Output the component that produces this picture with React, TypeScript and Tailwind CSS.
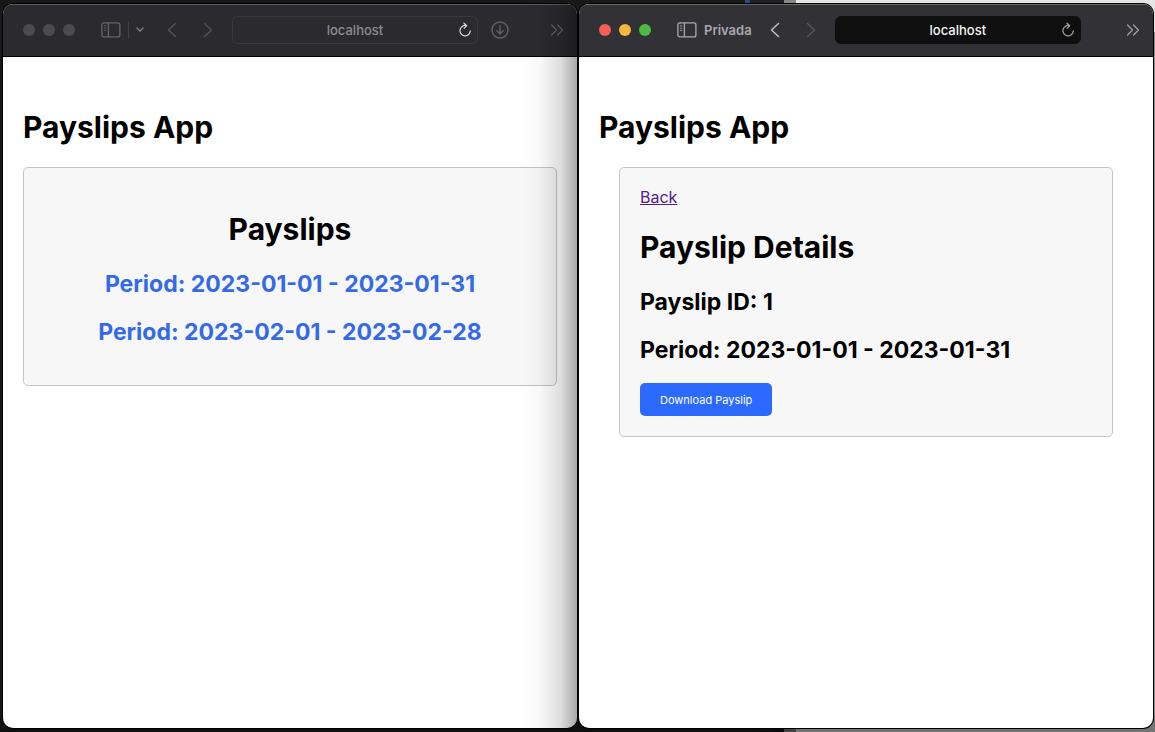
import type { ReactNode } from "react";

function SidebarIcon() {
  return (
    <svg width="20" height="16" viewBox="0 0 20 16" fill="none" stroke="currentColor" strokeWidth="1.3" aria-hidden="true">
      <rect x="0.9" y="0.9" width="18" height="14" rx="2" />
      <path d="M7.4 1v14" />
      <path d="M3.2 3.8h2M3.2 6.1h2M3.2 8.4h2" strokeWidth="1" />
    </svg>
  );
}

function Chevron({ flip = false }: { flip?: boolean }) {
  return (
    <svg width="10" height="16" viewBox="0 0 10 16" fill="none" stroke="currentColor" strokeWidth="1.5" strokeLinecap="round" strokeLinejoin="round" aria-hidden="true">
      <path d={flip ? "M1.5 1.5 8.5 8l-7 6.5" : "M8.5 1.5 1.5 8l7 6.5"} />
    </svg>
  );
}

function ReloadIcon() {
  return (
    <svg width="14" height="16" viewBox="0 0 14 16" fill="none" stroke="currentColor" strokeWidth="1.2" strokeLinecap="round" strokeLinejoin="round" aria-hidden="true">
      <path d="M8.2 3.6A5.2 5.2 0 1 0 12.3 8.8" />
      <path d="M6 1.2 8.7 3.7 6.1 6.3" />
    </svg>
  );
}

function DownloadIcon() {
  return (
    <svg width="18" height="18" viewBox="0 0 18 18" fill="none" stroke="currentColor" strokeWidth="1.4" strokeLinecap="round" strokeLinejoin="round" aria-hidden="true">
      <circle cx="9" cy="9" r="8" />
      <path d="M9 4.8v8M5.8 9.8 9 13l3.2-3.2" />
    </svg>
  );
}

function MoreIcon() {
  return (
    <svg width="14" height="12" viewBox="0 0 14 12" fill="none" stroke="currentColor" strokeWidth="1.2" strokeLinecap="round" strokeLinejoin="round" aria-hidden="true">
      <path d="M1.5 1 6.5 6l-5 5M7.5 1l5 5-5 5" />
    </svg>
  );
}

function Dots({ colors }: { colors: string[] }) {
  return (
    <div className="flex shrink-0 gap-2">
      {colors.map((color, i) => (
        <span key={i} className={`size-3 rounded-full ${color}`} />
      ))}
    </div>
  );
}

function IconButton({ label, className = "", children }: { label: string; className?: string; children: ReactNode }) {
  return (
    <button type="button" aria-label={label} className={`flex shrink-0 items-center justify-center ${className}`}>
      {children}
    </button>
  );
}

function AddressBar({ active = false }: { active?: boolean }) {
  return (
    <div
      className={`flex h-7 min-w-0 flex-1 items-center rounded-md border pr-1 pl-5 ${
        active ? "border-[#0f0f0f] bg-[#0f0f0f] text-[#f4f4f4]" : "border-[#39383d] text-[#8d8c91]"
      }`}
    >
      <input
        aria-label="Address"
        defaultValue="localhost"
        className="w-full min-w-0 flex-1 bg-transparent pt-0.5 text-center text-[13px] font-medium outline-none"
      />
      <IconButton label="Reload" className={active ? "w-4 text-[#a5a5a7]" : "w-4 text-[#dddddf]"}>
        <ReloadIcon />
      </IconButton>
    </div>
  );
}

function BrowserWindow({ active = false, toolbar, children }: { active?: boolean; toolbar: ReactNode; children: ReactNode }) {
  return (
    <section className="relative flex min-w-0 flex-1 flex-col overflow-hidden rounded-[10px] bg-white shadow-[0_0_0_1px_#000]">
      <div
        className={`flex h-[53px] shrink-0 items-center border-t border-b border-b-black pr-2.5 pb-0.5 pl-5 ${
          active ? "border-t-[#69696b] bg-[#323136]" : "border-t-[#5c5b60] bg-[#2b2a2f]"
        }`}
      >
        {toolbar}
      </div>
      <main className="flex-1 px-5 pt-[50px]">
        <h1 className="text-[30px] leading-10 font-bold">Payslips App</h1>
        {children}
      </main>
      {!active && (
        <div className="pointer-events-none absolute inset-y-0 right-0 w-14 bg-[linear-gradient(to_right,transparent,rgba(0,0,0,0.03)_35%,rgba(0,0,0,0.13)_70%,rgba(0,0,0,0.34))]" />
      )}
    </section>
  );
}

const payslips = ["2023-01-01 - 2023-01-31", "2023-02-01 - 2023-02-28"];

export default function App() {
  return (
    <div className="relative flex h-screen gap-0.5 overflow-hidden bg-[linear-gradient(to_right,#181818_745px,#294d83_745px,#294d83_750px,#202024_750px,#202024_784px,#858585_784px,#858585_796px,#e4e4e4_796px)] px-[3px] pt-1 pr-0.5 pb-1 font-['Inter',sans-serif] text-black">
      <div className="absolute inset-x-0 bottom-0 h-4 bg-[linear-gradient(to_right,#101010_750px,#0c0c10_784px,#434343_784px,#434343_796px,#747474_796px)]" />
      <div className="absolute top-8 right-0 bottom-4 w-0.5 bg-[#8c8c8c]" />
      <BrowserWindow
        toolbar={
          <>
            <Dots colors={["bg-[#4c4b50]", "bg-[#4c4b50]", "bg-[#4c4b50]"]} />
            <IconButton label="Sidebar" className="ml-6 w-6 text-[#66656a]"><SidebarIcon /></IconButton>
            <span className="ml-[5px] h-[18px] w-px bg-[#424146]" />
            <IconButton label="Tab groups" className="ml-1.5 w-2.5 text-[#85848a]">
              <svg width="8" height="5" viewBox="0 0 8 5" fill="none" stroke="currentColor" strokeWidth="1.3" strokeLinecap="round" aria-hidden="true">
                <path d="m1 1 3 3 3-3" />
              </svg>
            </IconButton>
            <IconButton label="Back" className="ml-[17px] w-5 text-[#525156]"><Chevron /></IconButton>
            <IconButton label="Forward" className="ml-4 w-5 text-[#525156]"><Chevron flip /></IconButton>
            <div className="ml-3.5 flex min-w-0 flex-1"><AddressBar /></div>
            <IconButton label="Downloads" className="ml-3 w-5 text-[#626166]"><DownloadIcon /></IconButton>
            <IconButton label="More" className="ml-[37px] w-5 text-[#626166]"><MoreIcon /></IconButton>
          </>
        }
      >
        <div className="mt-5 rounded-[5px] border border-[#c4c4c4] bg-[#f7f7f7] px-5 pt-[41px] pb-[39px] text-center">
          <h1 className="text-[30px] leading-10 font-bold">Payslips</h1>
          <ul className="mt-[21px] flex flex-col gap-5">
            {payslips.map((period) => (
              <li key={period} className="text-[23px] leading-7 font-bold text-[#346ae8]">
                <a href="#details">Period: {period}</a>
              </li>
            ))}
          </ul>
        </div>
      </BrowserWindow>

      <BrowserWindow
        active
        toolbar={
          <>
            <Dots colors={["bg-[#f26057]", "bg-[#f4b93c]", "bg-[#4dbb43]"]} />
            <IconButton label="Sidebar" className="ml-6 w-6 text-[#aaa9ae]"><SidebarIcon /></IconButton>
            <span className="ml-[5px] pt-0.5 text-[13px] font-semibold text-[#a9a8ad]">Privada</span>
            <IconButton label="Back" className="ml-[13px] w-5 text-[#c2c1c5]"><Chevron /></IconButton>
            <IconButton label="Forward" className="ml-4 w-5 text-[#56555a]"><Chevron flip /></IconButton>
            <div className="ml-3.5 flex min-w-0 flex-1"><AddressBar active /></div>
            <IconButton label="More" className="ml-[42px] w-5 text-[#a5a4a9]"><MoreIcon /></IconButton>
          </>
        }
      >
        <div className="mx-5 mt-5 rounded-[5px] border border-[#c4c4c4] bg-[#f7f7f7] p-5">
          <a href="#payslips" className="block text-base leading-[19px] text-[#551a8b] underline">Back</a>
          <h1 className="mt-5 text-[30px] leading-10 font-bold">Payslip Details</h1>
          <h2 className="mt-[21px] text-[23px] leading-7 font-bold">Payslip ID: 1</h2>
          <h2 className="mt-5 text-[23px] leading-7 font-bold">Period: {payslips[0]}</h2>
          <button type="button" className="mt-[19px] block rounded-[5px] bg-[#2b69ff] px-5 pt-[9px] pb-[7px] text-[11px] leading-[17px] text-white">
            Download Payslip
          </button>
        </div>
      </BrowserWindow>
    </div>
  );
}
